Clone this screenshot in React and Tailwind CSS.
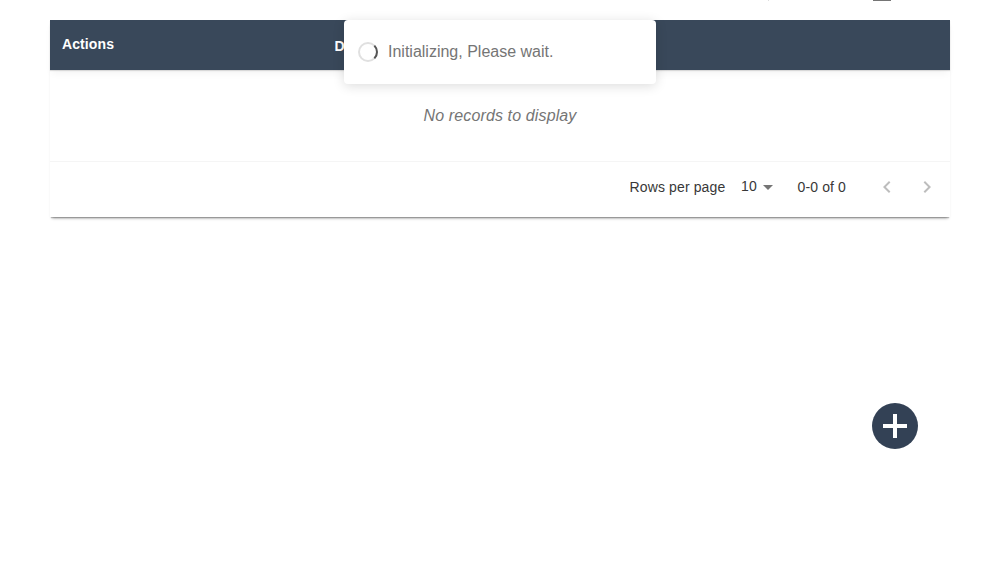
function Spinner() {
  return (
    <svg className="size-5 shrink-0" viewBox="0 0 20 20" fill="none" strokeWidth="2">
      <circle cx="10" cy="10" r="9" stroke="#e0e0e0" />
      <path d="M16.36 3.64A9 9 0 0 1 16.36 16.36" stroke="#555" />
    </svg>
  );
}

function LoadingToast() {
  return (
    <div
      role="status"
      className="absolute top-5 left-[344px] flex h-16 w-[312px] items-center gap-2.5 rounded bg-white pl-3.5 text-base text-[#757575] shadow-[0_2px_12px_0_rgba(0,0,0,0.14)]"
    >
      <Spinner />
      <span>Initializing, Please wait.</span>
    </div>
  );
}

function TableHeader() {
  return (
    <div className="relative flex h-[50px] items-start bg-[#39485a] text-sm font-bold text-white shadow-[0_1px_1px_rgba(0,0,0,0.12),0_5px_8px_-2px_rgba(0,0,0,0.05)]">
      <div className="w-[284.5px] pt-3.5 pl-3 tracking-[0.1px]">Actions</div>
      <div className="pt-4">D</div>
    </div>
  );
}

function Pagination() {
  return (
    <div className="flex h-[56px] items-center border-t border-[#f5f5f5] pb-[5px] text-sm tracking-[0.13px] text-[#383838]">
      <span className="ml-[579.5px] w-[111.5px] whitespace-nowrap">Rows per page</span>
      <span className="w-[16px] pb-0.5">10</span>
      <svg className="mt-px ml-[6px] h-[5px] w-2.5" viewBox="0 0 10 5" fill="#757575">
        <path d="M0 0h10L5 5z" />
      </svg>
      <span className="ml-[24.5px] w-[77.5px] whitespace-nowrap">0-0 of 0</span>
      <svg className="size-6" viewBox="0 0 24 24" fill="#bdbdbd">
        <path d="M15.41 7.41 14 6l-6 6 6 6 1.41-1.41L10.83 12z" />
      </svg>
      <svg className="ml-4 size-6" viewBox="0 0 24 24" fill="#bdbdbd">
        <path d="M10 6 8.59 7.41 13.17 12l-4.58 4.59L10 18l6-6z" />
      </svg>
    </div>
  );
}

export default function App() {
  return (
    <div className="relative h-[581px] overflow-hidden bg-white font-['Liberation_Sans',sans-serif]">
      <div className="flex h-5 items-start">
        <span className="ml-[768px] h-px w-px bg-[#dedede]" />
        <span className="ml-[104px] h-px w-[18px] bg-[#757575]" />
      </div>
      <main className="mx-auto h-[197px] w-[900px] bg-white shadow-[0_2px_1px_-1px_rgba(0,0,0,0.2),0_3px_3px_-2px_rgba(0,0,0,0.4)]">
        <TableHeader />
        <div className="flex h-[91px] items-center justify-center text-base tracking-[0.13px] text-[#757575] italic">
          No records to display
        </div>
        <Pagination />
      </main>
      <LoadingToast />
      <button
        aria-label="Add"
        className="absolute top-[403px] left-[872px] flex size-[46px] items-center justify-center rounded-full bg-[#334155]"
      >
        <svg className="size-6" viewBox="0 0 24 24" fill="#fff">
          <path d="M10 0h4v10h10v4H14v10h-4V14H0v-4h10z" />
        </svg>
      </button>
    </div>
  );
}
